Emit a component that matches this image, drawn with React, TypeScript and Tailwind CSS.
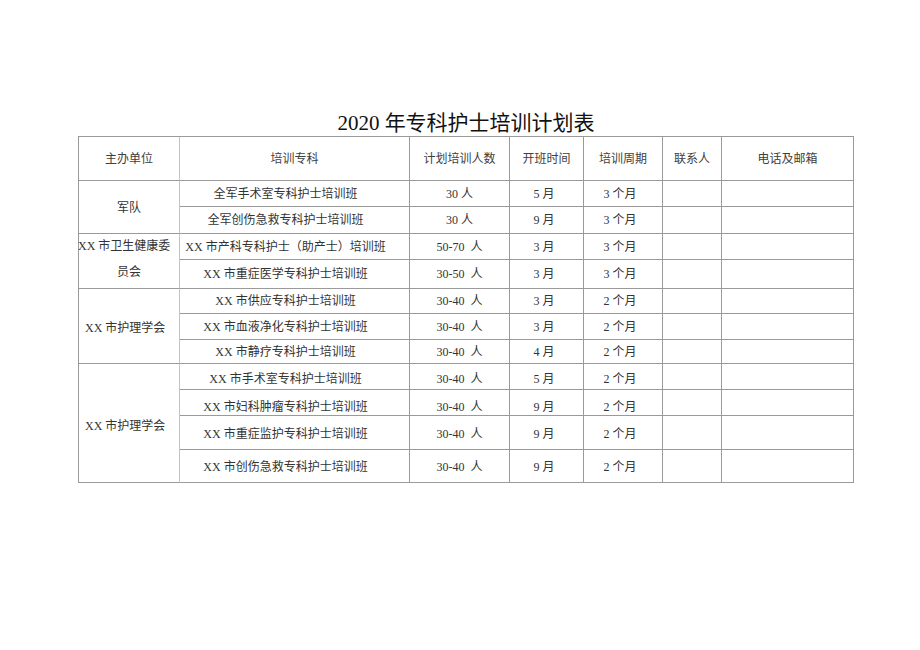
import React from "react";

type Row = { course: string; num: string; month: string; period: string; pt?: string };

const rows: Row[] = [
  { course: "全军手术室专科护士培训班", num: "30 人", month: "5 月", period: "3 个月" },
  { course: "全军创伤急救专科护士培训班", num: "30 人", month: "9 月", period: "3 个月" },
  { course: "XX 市产科专科护士（助产士）培训班", num: "50-70  人", month: "3 月", period: "3 个月" },
  { course: "XX 市重症医学专科护士培训班", num: "30-50  人", month: "3 月", period: "3 个月" },
  { course: "XX 市供应专科护士培训班", num: "30-40  人", month: "3 月", period: "2 个月" },
  { course: "XX 市血液净化专科护士培训班", num: "30-40  人", month: "3 月", period: "2 个月" },
  { course: "XX 市静疗专科护士培训班", num: "30-40  人", month: "4 月", period: "2 个月" },
  { course: "XX 市手术室专科护士培训班", num: "30-40  人", month: "5 月", period: "2 个月", pt: "pt-[5px]" },
  { course: "XX 市妇科肿瘤专科护士培训班", num: "30-40  人", month: "9 月", period: "2 个月", pt: "pt-[8px]" },
  { course: "XX 市重症监护专科护士培训班", num: "30-40  人", month: "9 月", period: "2 个月", pt: "pt-[2px]" },
  { course: "XX 市创伤急救专科护士培训班", num: "30-40  人", month: "9 月", period: "2 个月", pt: "pt-[1px]" },
];

const cell = "border-r border-b border-[#9a9a9a] flex items-center justify-center whitespace-pre";

export default function App() {
  return (
    <div
      className="min-h-[650px] w-[920px] bg-white pt-[110px] text-[#333333]"
      style={{ fontFamily: '"Liberation Serif", "Noto Sans CJK SC", serif' }}
    >
      <div className="w-[776px] ml-[78px] h-[26px] text-center text-[21px] leading-[26px] text-[#111111]">
        2020 年专科护士培训计划表
      </div>
      <div className="ml-[78px] grid w-[776px] grid-cols-[101px_230px_100px_74px_79px_59px_132px] grid-rows-[44px_26px_27px_26px_29px_25px_26px_24px_26px_26px_34px_33px] border-l border-t border-[#9a9a9a] text-[12px] leading-[14px]">
        {/* header */}
        <div className={`${cell} border-r-[#c4c4c4] pt-[1px] text-[#404040]`}>主办单位</div>
        <div className={`${cell} pt-[1px] text-[#404040]`}>培训专科</div>
        <div className={`${cell} pt-[1px] text-[#404040]`}>计划培训人数</div>
        <div className={`${cell} pt-[1px] text-[#404040]`}>开班时间</div>
        <div className={`${cell} pt-[1px] text-[#404040]`}>培训周期</div>
        <div className={`${cell} pt-[1px] text-[#404040]`}>联系人</div>
        <div className={`${cell} pt-[1px] text-[#404040]`}>电话及邮箱</div>

        {/* group cells */}
        <div className={`${cell} border-r-[#c4c4c4] col-start-1 row-start-2 row-span-2 pt-[2px]`}>军队</div>
        <div className="col-start-1 row-start-4 row-span-2 flex flex-col justify-center border-r border-b border-[#9a9a9a] border-r-[#c4c4c4] pb-[4px] leading-[26px]">
          <span className="-ml-px whitespace-nowrap text-left">XX 市卫生健康委</span>
          <span className="text-center">员会</span>
        </div>
        <div className="col-start-1 row-start-6 row-span-3 flex items-center border-r border-b border-[#9a9a9a] border-r-[#c4c4c4] pl-[6px] pt-[3px] whitespace-pre">
          XX 市护理学会
        </div>
        <div className="col-start-1 row-start-9 row-span-4 flex items-center border-r border-b border-[#9a9a9a] border-r-[#c4c4c4] pl-[6px] pt-[5px] whitespace-pre">
          XX 市护理学会
        </div>

        {rows.map((r, i) => (
          <React.Fragment key={i}>
            <div className={`${cell} col-start-2 pr-[18px] ${r.pt ?? ""}`}>{r.course}</div>
            <div className={`${cell} ${r.pt ?? ""}`}>{r.num}</div>
            <div className={`${cell} pr-[5px] ${r.pt ?? ""}`}>{r.month}</div>
            <div className={`${cell} pr-[6px] ${r.pt ?? ""}`}>{r.period}</div>
            <div className={cell}></div>
            <div className={cell}></div>
          </React.Fragment>
        ))}
      </div>
    </div>
  );
}
